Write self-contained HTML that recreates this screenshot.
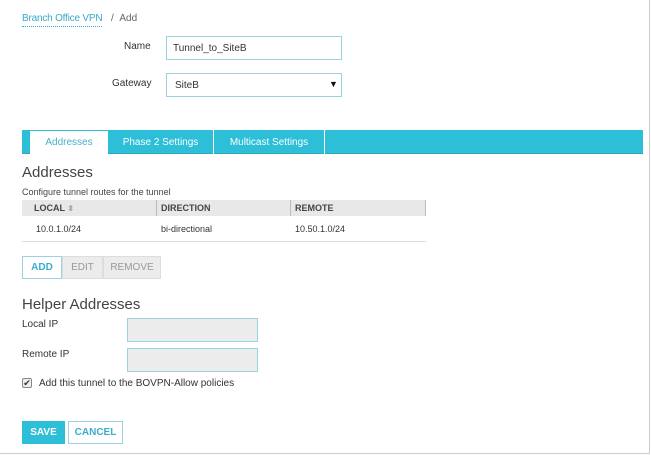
<!DOCTYPE html>
<html><head><style>
*{box-sizing:border-box;margin:0;padding:0}
body{width:651px;height:455px;background:#fff;font-family:"Liberation Sans",sans-serif;font-size:10px;color:#333;position:relative;overflow:hidden}
.frame{position:absolute;left:0;top:0;width:650px;height:454px;border-right:1px solid #ccc;border-bottom:1px solid #ccc}
.a{position:absolute;white-space:nowrap}
.inp{position:absolute;border:1px solid #9ad3df;background:#fff}
.gray{background:#ececec}
.btn{position:absolute;height:23px;font-size:10px;display:flex;align-items:center;justify-content:center}
</style></head><body>
<div class="frame"></div>
<div class="a" style="left:22px;top:12px;font-size:10px;color:#39a9c9;border-bottom:1px dotted #39a9c9;line-height:14px;letter-spacing:-0.2px">Branch Office VPN</div>
<div class="a" style="left:111px;top:12px;font-size:10px;color:#666;line-height:14px">/ &nbsp;Add</div>
<div class="a" style="left:124px;top:41px;font-size:10px">Name</div>
<div class="inp" style="left:166px;top:36px;width:176px;height:24px"></div>
<div class="a" style="left:173px;top:43px;font-size:10px">Tunnel_to_SiteB</div>
<div class="a" style="left:112px;top:78px;font-size:10px">Gateway</div>
<div class="inp" style="left:166px;top:73px;width:176px;height:24px"></div>
<div class="a" style="left:175px;top:80px;font-size:10px">SiteB</div>
<div class="a" style="left:329px;top:79px;font-size:9px;color:#111">▼</div>
<div class="a" style="left:22px;top:130px;width:621px;height:24px;background:#2dbed8;border-bottom:1px solid #2aa7bd"></div>
<div class="a" style="left:30px;top:131px;width:78px;height:24px;background:#fff;color:#4ab0c8;font-size:10px;text-align:center;line-height:24px">Addresses</div>
<div class="a" style="left:108px;top:130px;width:106px;height:24px;color:#fff;text-align:center;line-height:25px;border-right:1px solid #fff">Phase 2 Settings</div>
<div class="a" style="left:214px;top:130px;width:111px;height:24px;color:#fff;text-align:center;line-height:25px;border-right:1px solid #fff">Multicast Settings</div>
<div class="a" style="left:22px;top:164px;font-size:15px;color:#444">Addresses</div>
<div class="a" style="left:22px;top:187px;font-size:9px;color:#444">Configure tunnel routes for the tunnel</div>
<div class="a" style="left:22px;top:200px;width:404px;height:16px;background:#e8e8e8;border-right:1px solid #bbb"></div>
<div class="a" style="left:156px;top:200px;width:1px;height:16px;background:#bbb"></div>
<div class="a" style="left:290px;top:200px;width:1px;height:16px;background:#bbb"></div>
<div class="a" style="left:34px;top:203px;font-size:9px;font-weight:bold;color:#444">LOCAL <span style="color:#aaa;font-size:8px">⬍</span></div>
<div class="a" style="left:161px;top:203px;font-size:9px;font-weight:bold;color:#444">DIRECTION</div>
<div class="a" style="left:295px;top:203px;font-size:9px;font-weight:bold;color:#444">REMOTE</div>
<div class="a" style="left:36px;top:224px;font-size:9px">10.0.1.0/24</div>
<div class="a" style="left:161px;top:224px;font-size:9px">bi-directional</div>
<div class="a" style="left:295px;top:224px;font-size:9px">10.50.1.0/24</div>
<div class="a" style="left:22px;top:241px;width:404px;height:1px;background:#ddd"></div>
<div class="btn" style="left:22px;top:256px;width:40px;border:1px solid #9ad3df;color:#3aaec9;font-weight:bold">ADD</div>
<div class="btn" style="left:62px;top:256px;width:41px;background:#ececec;border:1px solid #ddd;color:#999">EDIT</div>
<div class="btn" style="left:103px;top:256px;width:58px;background:#ececec;border:1px solid #ddd;color:#999">REMOVE</div>
<div class="a" style="left:22px;top:296px;font-size:15px;color:#444">Helper Addresses</div>
<div class="a" style="left:22px;top:319px;font-size:10px">Local IP</div>
<div class="inp gray" style="left:127px;top:318px;width:131px;height:24px"></div>
<div class="a" style="left:22px;top:349px;font-size:10px">Remote IP</div>
<div class="inp gray" style="left:127px;top:348px;width:131px;height:24px"></div>
<div class="a" style="left:22px;top:378px;width:10px;height:10px;border:1px solid #888;border-radius:2px;background:#eee;font-size:9px;line-height:8px;text-align:center">✔</div>
<div class="a" style="left:39px;top:378px;font-size:10px">Add this tunnel to the BOVPN-Allow policies</div>
<div class="btn" style="left:22px;top:421px;width:43px;background:#2dbed8;color:#fff;font-weight:bold">SAVE</div>
<div class="btn" style="left:68px;top:421px;width:55px;border:1px solid #9ad3df;color:#3aaec9;font-weight:bold">CANCEL</div>
</body></html>
